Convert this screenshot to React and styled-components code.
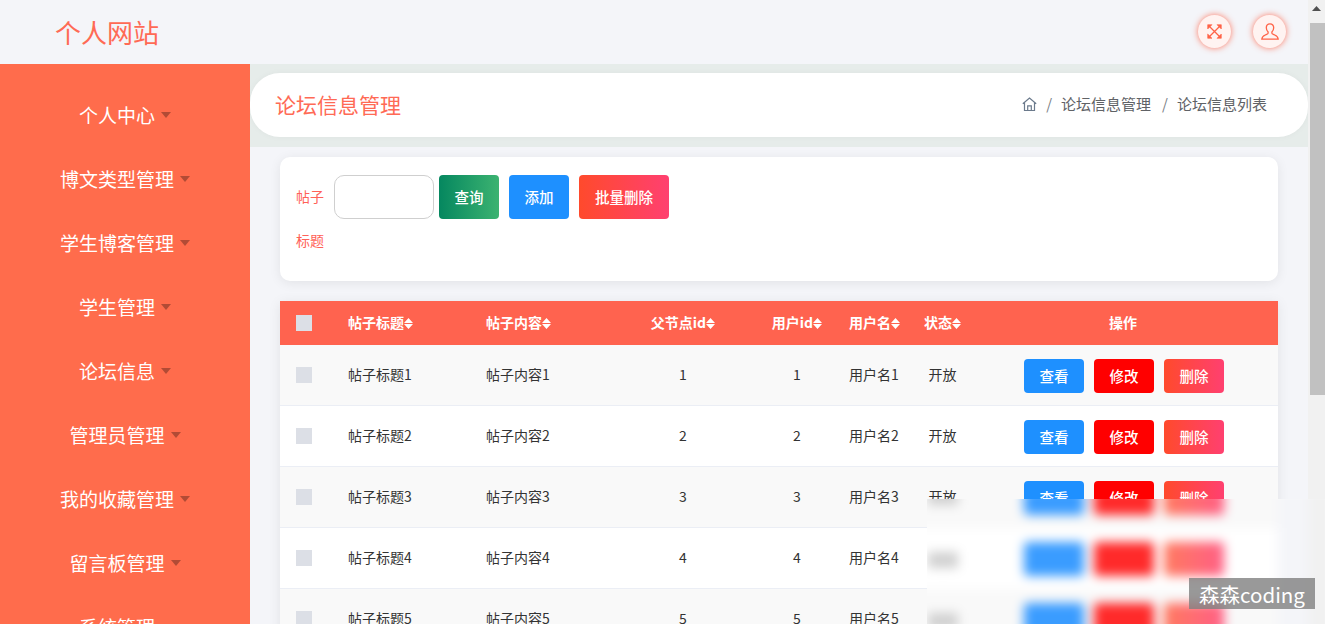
import React from 'react';
import styled, { createGlobalStyle } from 'styled-components';

const Global = createGlobalStyle`
  html, body { margin: 0; padding: 0; height: 100%; overflow: hidden; }
  body { font-family: "Noto Sans CJK SC", "Liberation Sans", sans-serif; background: #f4f5f9; }
  * { box-sizing: border-box; }
`;

const Page = styled.div`
  position: relative;
  display: flex;
  width: 1325px;
  height: 624px;
  overflow: hidden;
`;
const Main = styled.div`
  flex: 1;
  min-width: 0;
  display: flex;
  flex-direction: column;
`;
const Scrollbar = styled.div`
  width: 17px;
  flex: none;
  background: #f1f1f1;
  display: flex;
  flex-direction: column;
  align-items: flex-end;
`;
const ScrollUp = styled.div`
  width: 17px;
  height: 17px;
  display: flex;
  align-items: center;
  justify-content: center;
`;
const ScrollThumb = styled.div`
  width: 15px;
  height: 372px;
  margin-top: 6px;
  background: #c1c1c1;
`;
const Header = styled.header`
  height: 64px;
  flex: none;
  display: flex;
  align-items: center;
  justify-content: space-between;
  padding: 0 22px 2px 55px;
  background: #f4f5f9;
`;
const Logo = styled.div`
  margin-top: 2px;
  font-size: 26px;
  color: #ff6a55;
  line-height: 36px;
`;
const HeaderActions = styled.div`
  display: flex;
  gap: 22px;
`;
const RoundButton = styled.div`
  width: 33px;
  height: 33px;
  border-radius: 50%;
  background: #fff3f1;
  box-shadow: 0 0 6px rgba(255, 99, 71, 0.85);
  display: flex;
  align-items: center;
  justify-content: center;
`;
const Body = styled.div`
  flex: 1;
  min-height: 0;
  display: flex;
`;
const Sidebar = styled.nav`
  width: 250px;
  flex: none;
  padding-top: 19px;
  background: #ff6c4c;
  overflow: hidden;
`;
const MenuItem = styled.div`
  height: 64px;
  padding-bottom: 2px;
  display: flex;
  align-items: center;
  justify-content: center;
  gap: 6px;
  color: #fff;
  font-size: 19px;
`;
const Caret = styled.span`
  width: 0;
  height: 0;
  margin-top: 1px;
  border-left: 5.5px solid transparent;
  border-right: 5.5px solid transparent;
  border-top: 6px solid rgba(0, 0, 0, 0.3);
`;
const Content = styled.main`
  flex: 1;
  min-width: 0;
  overflow: hidden;
`;
const CrumbBand = styled.div`
  height: 83px;
  padding: 9px 0 10px;
  background: #e6ecea;
`;
const CrumbCard = styled.div`
  height: 64px;
  display: flex;
  align-items: center;
  justify-content: space-between;
  padding: 0 41px 3px 25px;
  background: #fff;
  border-radius: 30px;
  box-shadow: 0 0 6px rgba(0, 0, 0, 0.04);
`;
const PageTitle = styled.div`
  font-size: 21px;
  color: #ff6a55;
`;
const Crumbs = styled.div`
  display: flex;
  align-items: center;
  font-size: 15px;
  color: #606266;
`;
const HomeSlot = styled.span`
  display: flex;
  margin-right: -2px;
`;
const CrumbSep = styled.span`
  margin: 0 9px 0 11px;
  color: #7b7f86;
`;
const Inner = styled.div`
  padding: 10px 30px 0;
`;
const SearchCard = styled.section`
  display: flex;
  align-items: flex-start;
  padding: 18px 16px;
  margin-bottom: 20px;
  background: #fff;
  border-radius: 10px;
  box-shadow: 0 2px 12px rgba(0, 0, 0, 0.08);
`;
const FieldLabel = styled.label`
  width: 30px;
  height: 89px;
  margin: -1px 8px 0 0;
  font-size: 14px;
  line-height: 44px;
  color: #ff6258;
`;
const SearchInput = styled.input`
  width: 100px;
  height: 44px;
  margin-right: 5px;
  border: 1px solid #cfcfcf;
  border-radius: 10px;
  background: #fff;
  outline: none;
`;
const ActionButton = styled.button`
  width: ${p => p.$w || 60}px;
  height: ${p => p.$h || 44}px;
  padding: 0 0 2px;
  border: 0;
  border-radius: 4px;
  font-family: inherit;
  font-size: 14.5px;
  font-weight: 500;
  color: #fff;
  background: ${p => p.$bg};
`;
const SearchButtons = styled.div`
  display: flex;
  gap: 10px;
`;
const TableCard = styled.section`
  box-shadow: 0 2px 12px rgba(0, 0, 0, 0.08);
`;
const Table = styled.table`
  width: 998px;
  table-layout: fixed;
  border-collapse: separate;
  border-spacing: 0;
  font-size: 14px;
  color: #333;
`;
const HeadRow = styled.tr`
  height: 44px;
  background: #ff634f;
`;
const Th = styled.th`
  padding: 0 ${p => (p.$pr != null ? p.$pr : p.$align === 'center' ? 0 : 16)}px 2px ${p => (p.$align === 'center' ? 0 : 16)}px;
  font-size: 14px;
  font-weight: 700;
  color: #fff;
  text-align: ${p => p.$align || 'left'};
  white-space: nowrap;
`;
const Row = styled.tr`
  height: 61px;
  background: ${p => (p.$odd ? '#f9f9f9' : '#fff')};
`;
const Td = styled.td`
  padding: 0 ${p => (p.$pr != null ? p.$pr : p.$align === 'center' ? 0 : 16)}px 2px ${p => (p.$align === 'center' ? 0 : 16)}px;
  border-bottom: 1px solid #ebeef5;
  text-align: ${p => p.$align || 'left'};
  white-space: nowrap;
`;
const Check = styled.span`
  display: block;
  width: 16px;
  height: 16px;
  margin-top: 2px;
  background: #dcdfe6;
`;
const RowButtons = styled.div`
  display: flex;
  justify-content: center;
  gap: 10px;
  padding-top: 4px;
`;

/* Smudged corner of the screenshot: lies over the table and hides its text */
const SmudgePatch = styled.div`
  position: absolute;
  left: 927px;
  top: 499px;
  right: 0;
  bottom: 0;
  overflow: hidden;
  background: #fff;
`;
const SmudgeScene = styled.div`
  position: absolute;
  inset: -10px -10px -40px -10px;
  display: flex;
  filter: blur(5.5px);
`;
const SmudgeTable = styled.div`
  width: 361px;
  flex: none;
  display: flex;
  flex-direction: column;
`;
const SmudgeGutter = styled.div`
  width: 30px;
  flex: none;
  background: #f4f5f9;
`;
const SmudgeTrack = styled.div`
  flex: 1;
  background: #f1f1f1;
`;
const SmudgeRow = styled.div`
  height: ${p => p.$h}px;
  flex: none;
  display: flex;
  align-items: flex-start;
  padding: ${p => p.$top}px 0 0 11px;
  background: ${p => p.$bg};
`;
const SmudgeStatus = styled.div`
  width: 30px;
  height: ${p => p.$h}px;
  margin: ${p => p.$top}px 66px 0 0;
  background: #d0d0d0;
`;
const SmudgeButtons = styled.div`
  display: flex;
  gap: 10px;
`;
const SmudgeButton = styled.div`
  width: 60px;
  height: ${p => p.$h}px;
  border-radius: 4px;
  background: ${p => p.$bg};
`;

const Watermark = styled.div`
  position: absolute;
  left: 1189px;
  top: 578px;
  width: 126px;
  height: 31px;
  display: flex;
  align-items: center;
  justify-content: center;
  font-size: 20.5px;
  color: #fff;
  background: rgba(128, 128, 128, 0.8);
`;

const Sort = () => (
  <svg width="9" height="11" viewBox="0 0 9 11" style={{ verticalAlign: -1 }}>
    <path d="M4.500 0 9 5H0zM0 6h9l-4.500 5z" fill="#fff" />
  </svg>
);
const SortTitle = ({ children }) => <>{children}<Sort /></>;

const ExpandIcon = () => (
  <svg width="15" height="15" viewBox="0 0 15 15" fill="none" stroke="#ff6347" strokeWidth="1.3">
    <path d="M1.500 1.500l12 12M13.500 1.500l-12 12" />
    <path d="M.7.700h4.300L.7 5zM14.300.7V5L10 .7zM14.300 14.300H10l4.300-4.300zM.7 14.300V10L5 14.300z" fill="#ff6347" strokeWidth=".6" />
  </svg>
);
const UserIcon = () => (
  <svg width="18" height="17" viewBox="0 0 18 17" fill="none" stroke="#ff6347" strokeWidth="1.3">
    <path d="M9 .8C6.600.8 5.300 2.600 5.300 4.800c0 1.800.8 3.200 1.800 4.100v1.300c0 .7-1 1-2.800 1.800C2.400 12.800 1 13.500.8 16.200h16.400c-.2-2.700-1.600-3.400-3.500-4.200-1.800-.8-2.800-1.100-2.800-1.800V8.900c1-.9 1.800-2.300 1.800-4.100C12.700 2.600 11.400.8 9 .8z" />
  </svg>
);
const HomeIcon = () => (
  <svg width="15" height="14" viewBox="0 0 15 14" fill="none" stroke="#6b7a8c" strokeWidth="1.2">
    <path d="M.8 6.800 7.500 1l6.700 5.800M2.500 5.500v8h10v-8M5.700 13.500V8.800h3.600v4.700" />
  </svg>
);

const menu = ['个人中心', '博文类型管理', '学生博客管理', '学生管理', '论坛信息', '管理员管理', '我的收藏管理', '留言板管理', '系统管理'];
const rows = [1, 2, 3, 4, 5];
const del = 'linear-gradient(90deg, #ff4a2c, #ff4070)';
const smudgeDel = 'linear-gradient(90deg, #ff7a60, #ff5f85)';

const smudgeRows = [
  { h: 39, top: 0, bg: '#f9f9f9', btn: 26, statusTop: 0, statusH: 16 },
  { h: 61, top: 14, bg: '#fff', btn: 34, statusTop: 10, statusH: 16 },
  { h: 61, top: 14, bg: '#f9f9f9', btn: 34, statusTop: 10, statusH: 16 },
];

export default function App() {
  return (
    <Page>
      <Global />
      <Main>
        <Header>
          <Logo>个人网站</Logo>
          <HeaderActions>
            <RoundButton><ExpandIcon /></RoundButton>
            <RoundButton><UserIcon /></RoundButton>
          </HeaderActions>
        </Header>
        <Body>
          <Sidebar>
            {menu.map(m => <MenuItem key={m}>{m}<Caret /></MenuItem>)}
          </Sidebar>
          <Content>
            <CrumbBand>
              <CrumbCard>
                <PageTitle>论坛信息管理</PageTitle>
                <Crumbs>
                  <HomeSlot><HomeIcon /></HomeSlot>
                  <CrumbSep>/</CrumbSep>
                  <span>论坛信息管理</span>
                  <CrumbSep>/</CrumbSep>
                  <span>论坛信息列表</span>
                </Crumbs>
              </CrumbCard>
            </CrumbBand>
            <Inner>
              <SearchCard>
                <FieldLabel>帖子标题</FieldLabel>
                <SearchInput />
                <SearchButtons>
                  <ActionButton $bg="linear-gradient(90deg, #05875f, #3cb371)">查询</ActionButton>
                  <ActionButton $bg="#1e90ff">添加</ActionButton>
                  <ActionButton $w={90} $bg={del}>批量删除</ActionButton>
                </SearchButtons>
              </SearchCard>
              <TableCard>
                <Table>
                  <colgroup>
                    <col style={{ width: 52 }} />
                    <col style={{ width: 138 }} />
                    <col style={{ width: 135 }} />
                    <col style={{ width: 156 }} />
                    <col style={{ width: 72 }} />
                    <col style={{ width: 75 }} />
                    <col style={{ width: 69 }} />
                    <col style={{ width: 301 }} />
                  </colgroup>
                  <thead>
                    <HeadRow>
                      <Th><Check /></Th>
                      <Th><SortTitle>帖子标题</SortTitle></Th>
                      <Th><SortTitle>帖子内容</SortTitle></Th>
                      <Th $align="center"><SortTitle>父节点id</SortTitle></Th>
                      <Th $align="center"><SortTitle>用户id</SortTitle></Th>
                      <Th><SortTitle>用户名</SortTitle></Th>
                      <Th><SortTitle>状态</SortTitle></Th>
                      <Th $align="center" $pr={9}>操作</Th>
                    </HeadRow>
                  </thead>
                  <tbody>
                    {rows.map(n => (
                      <Row key={n} $odd={n % 2 === 1}>
                        <Td><Check /></Td>
                        <Td>帖子标题{n}</Td>
                        <Td>帖子内容{n}</Td>
                        <Td $align="center">{n}</Td>
                        <Td $align="center">{n}</Td>
                        <Td>用户名{n}</Td>
                        <Td $align="center">开放</Td>
                        <Td $align="center" $pr={7}>
                          <RowButtons>
                            <ActionButton $h={34} $bg="#1e90ff">查看</ActionButton>
                            <ActionButton $h={34} $bg="#ff0000">修改</ActionButton>
                            <ActionButton $h={34} $bg={del}>删除</ActionButton>
                          </RowButtons>
                        </Td>
                      </Row>
                    ))}
                  </tbody>
                </Table>
              </TableCard>
            </Inner>
          </Content>
        </Body>
      </Main>
      <Scrollbar>
        <ScrollUp>
          <svg width="9" height="5" viewBox="0 0 9 5"><path d="M4.500 0 9 5H0z" fill="#505050" /></svg>
        </ScrollUp>
        <ScrollThumb />
      </Scrollbar>
      <SmudgePatch aria-hidden="true">
        <SmudgeScene>
          <SmudgeTable>
            {smudgeRows.map((r, i) => (
              <SmudgeRow key={i} $h={r.h} $top={r.top} $bg={r.bg}>
                <SmudgeStatus $top={r.statusTop} $h={r.statusH} />
                <SmudgeButtons>
                  <SmudgeButton $h={r.btn} $bg="#3a9cff" />
                  <SmudgeButton $h={r.btn} $bg="#ff2a2a" />
                  <SmudgeButton $h={r.btn} $bg={smudgeDel} />
                </SmudgeButtons>
              </SmudgeRow>
            ))}
          </SmudgeTable>
          <SmudgeGutter />
          <SmudgeTrack />
        </SmudgeScene>
      </SmudgePatch>
      <Watermark>森森coding</Watermark>
    </Page>
  );
}
